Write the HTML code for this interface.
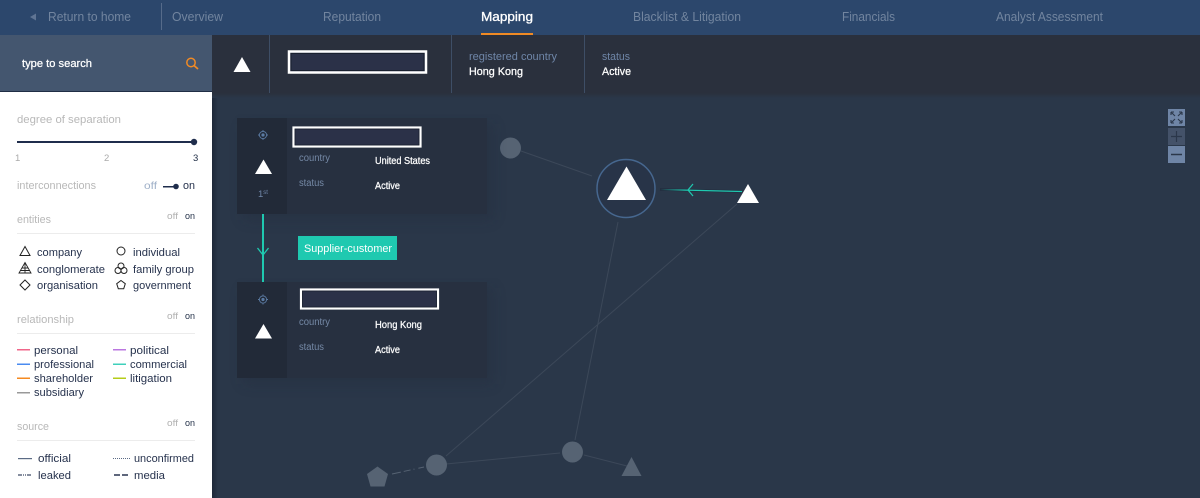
<!DOCTYPE html>
<html><head><meta charset="utf-8"><title>Mapping</title>
<style>
html,body{margin:0;padding:0;width:1200px;height:498px;overflow:hidden;background:#2a3749}
svg{display:block}
text{font-family:"Liberation Sans",sans-serif;font-size:11px}
.nav{font-size:12.5px;fill:#72859f}
.g{fill:#b8b8b8;font-size:11px}
.d{fill:#26324d;font-size:11px}
.l{fill:#7589a6;font-size:10px}
.w{fill:#fff;font-size:10.5px;stroke:#fff;stroke-width:.25px}
.o{fill:#b0b0b0;font-size:9.500px}
.n{fill:#1f2d45;font-size:9.500px}
</style></head>
<body>
<svg width="1200" height="498" viewBox="0 0 1200 498" xmlns="http://www.w3.org/2000/svg">
<defs>
<linearGradient id="arrow" x1="0" x2="1" y1="0" y2="0"><stop offset="0" stop-color="#1fc9b0" stop-opacity="0"/><stop offset=".3" stop-color="#1fc9b0"/><stop offset="1" stop-color="#1fc9b0"/></linearGradient>
<linearGradient id="hb" x1="0" x2="0" y1="0" y2="1"><stop offset="0" stop-color="#2a303d"/><stop offset="1" stop-color="#2a3749"/></linearGradient>
<linearGradient id="vb" x1="0" x2="1" y1="0" y2="0"><stop offset="0" stop-color="#1e2839"/><stop offset="1" stop-color="#2a3749"/></linearGradient>
<filter id="sh" x="-10%" y="-10%" width="125%" height="125%"><feGaussianBlur stdDeviation="7"/></filter>
</defs>
<rect width="1200" height="498" fill="#2a3749"/>
<rect x="212" y="92" width="6" height="406" fill="url(#vb)"/>
<!-- top nav -->
<rect width="1200" height="35" fill="#2c476c"/>
<path d="M36 13.500v7l-6-3.500z" fill="#5f7493"/>
<text class="nav" x="48" y="21" textLength="83" lengthAdjust="spacingAndGlyphs">Return to home</text>
<rect x="161" y="3" width="1" height="27" fill="#566b8a"/>
<text class="nav" x="172" y="21" textLength="51" lengthAdjust="spacingAndGlyphs">Overview</text>
<text class="nav" x="323" y="21" textLength="58" lengthAdjust="spacingAndGlyphs">Reputation</text>
<text class="nav" x="481" y="21" textLength="52" lengthAdjust="spacingAndGlyphs" style="fill:#fff;stroke:#fff;stroke-width:.3px">Mapping</text>
<rect x="481" y="33" width="52" height="2" fill="#f08a24"/>
<text class="nav" x="633" y="21" textLength="108" lengthAdjust="spacingAndGlyphs">Blacklist &amp; Litigation</text>
<text class="nav" x="842" y="21" textLength="53" lengthAdjust="spacingAndGlyphs">Financials</text>
<text class="nav" x="996" y="21" textLength="107" lengthAdjust="spacingAndGlyphs">Analyst Assessment</text>

<!-- header bar -->
<rect x="212" y="35" width="988" height="58" fill="#2a303d"/>
<rect x="212" y="93" width="988" height="5" fill="url(#hb)"/>
<rect x="269" y="35" width="1" height="58" fill="#3e4e66"/>
<rect x="451" y="35" width="1" height="58" fill="#3e4e66"/>
<rect x="584" y="35" width="1" height="58" fill="#3e4e66"/>
<path d="M242 57l8.500 15h-17z" fill="#fff"/>
<rect x="289" y="51.500" width="137" height="21" fill="#2b3148" stroke="#fff" stroke-width="2.500"/>
<rect x="291" y="53.500" width="133" height="17" fill="none" stroke="#1a2130" stroke-width="1"/>
<text x="469" y="60" textLength="88" lengthAdjust="spacingAndGlyphs" style="fill:#6f86a8;font-size:11px">registered country</text>
<text x="469" y="75" textLength="54" lengthAdjust="spacingAndGlyphs" style="fill:#fff;font-size:11px;stroke:#fff;stroke-width:.25px">Hong Kong</text>
<text x="602" y="60" textLength="28" lengthAdjust="spacingAndGlyphs" style="fill:#6f86a8;font-size:11px">status</text>
<text x="602" y="75" textLength="29" lengthAdjust="spacingAndGlyphs" style="fill:#fff;font-size:11px;stroke:#fff;stroke-width:.25px">Active</text>

<!-- sidebar -->
<rect x="0" y="35" width="212" height="56" fill="#44566f"/>
<rect x="0" y="91" width="212" height="1" fill="#1f2d45"/>
<rect x="0" y="92" width="212" height="406" fill="#fff"/>
<text x="22" y="67" textLength="70" lengthAdjust="spacingAndGlyphs" style="fill:#fff;font-size:11px;stroke:#fff;stroke-width:.25px">type to search</text>
<circle cx="191" cy="62.500" r="4.200" fill="none" stroke="#f08a24" stroke-width="1.500"/>
<path d="M194 65.500l4 3.500" stroke="#f08a24" stroke-width="1.800"/>

<text class="g" x="17" y="123" textLength="104" lengthAdjust="spacingAndGlyphs">degree of separation</text>
<rect x="17" y="141" width="177" height="2" fill="#1f2d4c"/>
<circle cx="194" cy="142" r="3.200" fill="#1f2d4c"/>
<text x="15" y="161" style="fill:#aaa;font-size:9.500px">1</text>
<text x="104" y="161" style="fill:#aaa;font-size:9.500px">2</text>
<text x="193" y="161" style="fill:#1f2d45;font-size:9.500px">3</text>

<text class="g" x="17" y="189" textLength="79" lengthAdjust="spacingAndGlyphs">interconnections</text>
<text x="144" y="189" textLength="13" lengthAdjust="spacingAndGlyphs" style="fill:#9fb0c8;font-size:10.500px">off</text>
<rect x="163" y="186" width="14" height="1.500" fill="#1f2d4c"/>
<circle cx="176" cy="186.500" r="2.800" fill="#1f2d4c"/>
<text class="d" x="183" y="189" textLength="12" lengthAdjust="spacingAndGlyphs">on</text>

<text class="g" x="17" y="223" textLength="34" lengthAdjust="spacingAndGlyphs">entities</text>
<text class="o" x="167" y="219" textLength="11" lengthAdjust="spacingAndGlyphs">off</text>
<text class="n" x="185" y="219" textLength="10" lengthAdjust="spacingAndGlyphs">on</text>
<rect x="17" y="233" width="178" height="1" fill="#ececec"/>

<path d="M25 246.500l5 9h-10z" fill="none" stroke="#222" stroke-width="1"/>
<text class="d" x="37" y="256" textLength="45" lengthAdjust="spacingAndGlyphs">company</text>
<circle cx="121" cy="251" r="4" fill="none" stroke="#222"/>
<text class="d" x="133" y="256" textLength="47" lengthAdjust="spacingAndGlyphs">individual</text>
<path d="M25 262.500l6 10.500h-12zM22 268h6M20.500 270.500h9M25 262.500v10.500" fill="none" stroke="#222" stroke-width=".9"/>
<text class="d" x="37" y="273" textLength="68" lengthAdjust="spacingAndGlyphs">conglomerate</text>
<g fill="none" stroke="#222" stroke-width="1"><circle cx="121" cy="266" r="3"/><circle cx="118" cy="270.500" r="3"/><circle cx="124" cy="270.500" r="3"/></g>
<text class="d" x="133" y="273" textLength="61" lengthAdjust="spacingAndGlyphs">family group</text>
<path d="M25 280l5 5-5 5-5-5z" fill="none" stroke="#222" stroke-width="1"/>
<text class="d" x="37" y="289" textLength="61" lengthAdjust="spacingAndGlyphs">organisation</text>
<path d="M121 280.500l4.300 3.200-1.600 5h-5.400l-1.600-5z" fill="none" stroke="#222" stroke-width="1"/>
<text class="d" x="133" y="289" textLength="58" lengthAdjust="spacingAndGlyphs">government</text>

<text class="g" x="17" y="323" textLength="57" lengthAdjust="spacingAndGlyphs">relationship</text>
<text class="o" x="167" y="319" textLength="11" lengthAdjust="spacingAndGlyphs">off</text>
<text class="n" x="185" y="319" textLength="10" lengthAdjust="spacingAndGlyphs">on</text>
<rect x="17" y="333" width="178" height="1" fill="#ececec"/>

<rect x="17" y="349" width="13" height="1.500" fill="#f0668a"/>
<text class="d" x="34" y="354" textLength="44" lengthAdjust="spacingAndGlyphs">personal</text>
<rect x="113" y="349" width="13" height="1.500" fill="#bb77e0"/>
<text class="d" x="130" y="354" textLength="39" lengthAdjust="spacingAndGlyphs">political</text>
<rect x="17" y="363.500" width="13" height="1.500" fill="#4a8bf0"/>
<text class="d" x="34" y="368" textLength="60" lengthAdjust="spacingAndGlyphs">professional</text>
<rect x="113" y="363.500" width="13" height="1.500" fill="#3fd0bb"/>
<text class="d" x="130" y="368" textLength="57" lengthAdjust="spacingAndGlyphs">commercial</text>
<rect x="17" y="377.500" width="13" height="1.500" fill="#f58a20"/>
<text class="d" x="34" y="382" textLength="59" lengthAdjust="spacingAndGlyphs">shareholder</text>
<rect x="113" y="377.500" width="13" height="1.500" fill="#b5cc18"/>
<text class="d" x="130" y="382" textLength="42" lengthAdjust="spacingAndGlyphs">litigation</text>
<rect x="17" y="392" width="13" height="1.500" fill="#999"/>
<text class="d" x="34" y="396" textLength="50" lengthAdjust="spacingAndGlyphs">subsidiary</text>

<text class="g" x="17" y="430" textLength="32" lengthAdjust="spacingAndGlyphs">source</text>
<text class="o" x="167" y="426" textLength="11" lengthAdjust="spacingAndGlyphs">off</text>
<text class="n" x="185" y="426" textLength="10" lengthAdjust="spacingAndGlyphs">on</text>
<rect x="17" y="440" width="178" height="1" fill="#ececec"/>

<rect x="18" y="458" width="14" height="1.200" fill="#5b6b85"/>
<text class="d" x="38" y="462" textLength="33" lengthAdjust="spacingAndGlyphs">official</text>
<path d="M113 458.500h17" stroke="#5b6b85" stroke-width="1" stroke-dasharray="1 1"/>
<text class="d" x="134" y="462" textLength="60" lengthAdjust="spacingAndGlyphs">unconfirmed</text>
<path d="M18 475h14" stroke="#3d4b66" stroke-width="1.200" stroke-dasharray="4 1 1 1 1 1"/>
<text class="d" x="38" y="479" textLength="33" lengthAdjust="spacingAndGlyphs">leaked</text>
<path d="M114 475h14" stroke="#2a3550" stroke-width="1.400" stroke-dasharray="6 2"/>
<text class="d" x="134" y="479" textLength="31" lengthAdjust="spacingAndGlyphs">media</text>

<!-- graph edges -->
<g fill="none" stroke="#3c4859" stroke-width="1">
<path d="M521 151L592 176"/>
<path d="M618 222L575 440"/>
<path d="M737 204L446 456"/>
<path d="M446 464L560 453"/>
<path d="M584 455L627 466"/>
<path d="M392 474L424 467" stroke="#566373" stroke-dasharray="9 3 7 3 1 4"/>
</g>
<path d="M660 189.500L742 191.500" stroke="#1a2233" stroke-width="2.400" fill="none" opacity=".5"/>
<path d="M660 189.500L742 191.500" stroke="url(#arrow)" stroke-width="1.200" fill="none"/>
<path d="M693 184L688 190L693 196" stroke="#1fc9b0" stroke-width="1.200" fill="none"/>

<!-- nodes -->
<circle cx="510.500" cy="148" r="10.500" fill="#566373"/>
<circle cx="436.500" cy="465" r="10.500" fill="#566373"/>
<circle cx="572.500" cy="452" r="10.500" fill="#566373"/>
<path d="M631.500 457l10 19h-20z" fill="#566373"/>
<path d="M377.500 466.500l10.500 7.500-3.500 12.500h-14l-3.500-12.500z" fill="#566373"/>
<circle cx="626" cy="188.500" r="29" fill="#283448" stroke="#46678f" stroke-width="1.500"/>
<path d="M626.500 166.500l19.500 33.500h-39z" fill="#fff"/>
<path d="M748 184l11 19h-22z" fill="#fff"/>

<!-- cards -->
<rect x="243" y="124" width="250" height="96" fill="#1c2330" opacity=".22" filter="url(#sh)"/>
<rect x="243" y="288" width="250" height="96" fill="#1c2330" opacity=".22" filter="url(#sh)"/>
<rect x="237" y="118" width="250" height="96" fill="#273040"/>
<rect x="237" y="118" width="50" height="96" fill="#222a38"/>
<rect x="237" y="282" width="250" height="96" fill="#273040"/>
<rect x="237" y="282" width="50" height="96" fill="#222a38"/>
<rect x="262" y="214" width="2" height="68" fill="#1fc9b0"/>
<path d="M257.500 248L263 255L268.500 248" stroke="#1fc9b0" stroke-width="1.300" fill="none"/>

<g fill="none" stroke="#5b7ba3" stroke-width=".9"><circle cx="263" cy="135" r="3.600"/><path d="M263 130v1.500M263 138.500v1.500M258 135h1.500M266.500 135h1.500"/></g>
<circle cx="263" cy="135" r="1.600" fill="#5b7ba3"/>
<path d="M263.500 159.500l8.500 14.500h-17z" fill="#fff"/>
<text x="258" y="197" style="fill:#6f86a8;font-size:9.500px">1<tspan font-size="6" dy="-3">st</tspan></text>
<rect x="293.500" y="127.500" width="127" height="19" fill="#2b3148" stroke="#fff" stroke-width="2.200"/>
<rect x="295" y="129" width="124" height="16" fill="none" stroke="#1a2130" stroke-width=".8"/>
<text x="299" y="161" textLength="31" lengthAdjust="spacingAndGlyphs" class="l">country</text>
<text x="299" y="186" textLength="25" lengthAdjust="spacingAndGlyphs" class="l">status</text>
<text x="375" y="164" textLength="55" lengthAdjust="spacingAndGlyphs" class="w">United States</text>
<text x="375" y="189" textLength="25" lengthAdjust="spacingAndGlyphs" class="w">Active</text>

<rect x="298" y="236" width="99" height="24" fill="#1fc9b0"/>
<text x="304" y="252" textLength="88" lengthAdjust="spacingAndGlyphs" style="fill:#fff;font-size:11px">Supplier-customer</text>

<g fill="none" stroke="#5b7ba3" stroke-width=".9"><circle cx="263" cy="299.500" r="3.600"/><path d="M263 294.500v1.500M263 303v1.500M258 299.500h1.500M266.500 299.500h1.500"/></g>
<circle cx="263" cy="299.500" r="1.600" fill="#5b7ba3"/>
<path d="M263.500 324l8.500 14.500h-17z" fill="#fff"/>
<rect x="301" y="289.500" width="137" height="19" fill="#2b3148" stroke="#fff" stroke-width="2.200"/>
<rect x="302.500" y="291" width="134" height="16" fill="none" stroke="#1a2130" stroke-width=".8"/>
<text x="299" y="325" textLength="31" lengthAdjust="spacingAndGlyphs" class="l">country</text>
<text x="299" y="350" textLength="25" lengthAdjust="spacingAndGlyphs" class="l">status</text>
<text x="375" y="328" textLength="47" lengthAdjust="spacingAndGlyphs" class="w">Hong Kong</text>
<text x="375" y="353" textLength="25" lengthAdjust="spacingAndGlyphs" class="w">Active</text>

<!-- zoom controls -->
<rect x="1168" y="109" width="17" height="17" fill="#6f85a6"/>
<path d="M1171 112l4 4M1171 112h3M1171 112v3M1182 112l-4 4M1182 112h-3M1182 112v3M1171 123l4-4M1171 123h3M1171 123v-3M1182 123l-4-4M1182 123h-3M1182 123v-3" stroke="#2b374a" stroke-width="1.100" fill="none"/>
<rect x="1168" y="128" width="17" height="17" fill="#445269"/>
<path d="M1176.500 131v11M1171 136.500h11" stroke="#2b374a" stroke-width="1.200"/>
<rect x="1168" y="146" width="17" height="17" fill="#6f85a6"/>
<path d="M1171 154.500h11" stroke="#2b374a" stroke-width="1.500"/>
</svg>
</body></html>
